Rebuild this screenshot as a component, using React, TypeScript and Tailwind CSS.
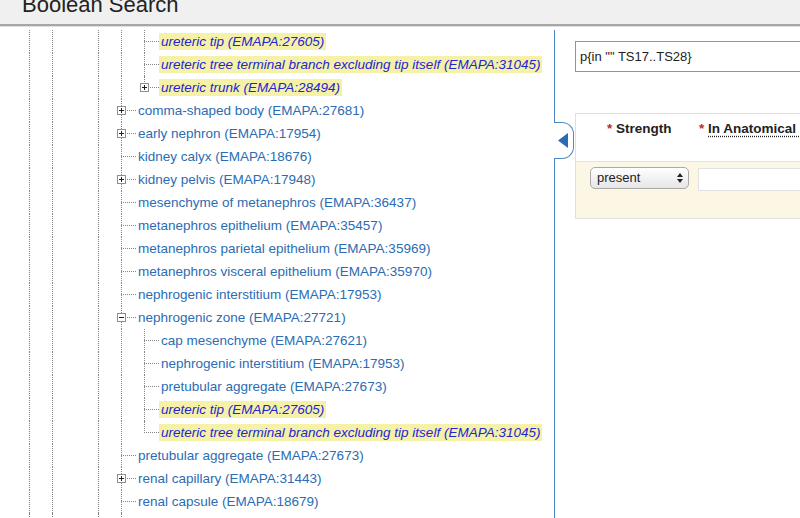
type Row = {
  level: number;
  text: string;
  lines: number[];
  hl?: boolean;
  box?: "+" | "-";
  last?: boolean;
};

const deep = [0, 1, 3, 4];
const mid = [0, 1, 3];

const rows: Row[] = [
  { level: 5, lines: deep, hl: true, text: "ureteric tip (EMAPA:27605)" },
  { level: 5, lines: deep, hl: true, text: "ureteric tree terminal branch excluding tip itself (EMAPA:31045)" },
  { level: 5, lines: deep, hl: true, box: "+", last: true, text: "ureteric trunk (EMAPA:28494)" },
  { level: 4, lines: mid, box: "+", text: "comma-shaped body (EMAPA:27681)" },
  { level: 4, lines: mid, box: "+", text: "early nephron (EMAPA:17954)" },
  { level: 4, lines: mid, text: "kidney calyx (EMAPA:18676)" },
  { level: 4, lines: mid, box: "+", text: "kidney pelvis (EMAPA:17948)" },
  { level: 4, lines: mid, text: "mesenchyme of metanephros (EMAPA:36437)" },
  { level: 4, lines: mid, text: "metanephros epithelium (EMAPA:35457)" },
  { level: 4, lines: mid, text: "metanephros parietal epithelium (EMAPA:35969)" },
  { level: 4, lines: mid, text: "metanephros visceral epithelium (EMAPA:35970)" },
  { level: 4, lines: mid, text: "nephrogenic interstitium (EMAPA:17953)" },
  { level: 4, lines: mid, box: "-", text: "nephrogenic zone (EMAPA:27721)" },
  { level: 5, lines: deep, text: "cap mesenchyme (EMAPA:27621)" },
  { level: 5, lines: deep, text: "nephrogenic interstitium (EMAPA:17953)" },
  { level: 5, lines: deep, text: "pretubular aggregate (EMAPA:27673)" },
  { level: 5, lines: deep, hl: true, text: "ureteric tip (EMAPA:27605)" },
  { level: 5, lines: deep, hl: true, last: true, text: "ureteric tree terminal branch excluding tip itself (EMAPA:31045)" },
  { level: 4, lines: mid, text: "pretubular aggregate (EMAPA:27673)" },
  { level: 4, lines: mid, box: "+", text: "renal capillary (EMAPA:31443)" },
  { level: 4, lines: mid, text: "renal capsule (EMAPA:18679)" },
];

const ToggleBox = ({ sign }: { sign: "+" | "-" }) => (
  <svg width="9" height="9" viewBox="0 0 9 9" className="absolute left-[8px] top-[7px]">
    <rect x="0.5" y="0.5" width="8" height="8" fill="#fff" stroke="#8f8f8f" />
    <line x1="2" y1="4.5" x2="7" y2="4.5" stroke="#222" />
    {sign === "+" && <line x1="4.5" y1="2" x2="4.5" y2="7" stroke="#222" />}
  </svg>
);

const IndentCols = ({ count, lines }: { count: number; lines: number[] }) => (
  <>
    {Array.from({ length: count }).map((_, i) => (
      <div key={i} className="relative w-[23px] h-full shrink-0">
        {lines.includes(i) && (
          <div className="absolute left-[12px] top-0 h-full border-l border-dotted border-[#858585]" />
        )}
      </div>
    ))}
  </>
);

const TreeRow = ({ row }: { row: Row }) => (
  <div className="flex h-[23px] items-center whitespace-nowrap">
    <IndentCols count={row.level} lines={row.lines} />
    <div className="relative w-[27px] h-full shrink-0">
      <div
        className={`absolute left-[12px] top-0 border-l border-dotted border-[#858585] ${
          row.last ? "h-[12px]" : "h-full"
        }`}
      />
      <div className="absolute left-[12px] top-[11px] w-[15px] border-t border-dotted border-[#858585]" />
      {row.box && <ToggleBox sign={row.box} />}
    </div>
    {row.hl ? (
      <span className="inline-block px-[2px] leading-[17px] bg-[#f5f2a8] italic text-[#2424d6]">
        {row.text}
      </span>
    ) : (
      <span className="inline-block px-[2px] leading-[17px] text-[#2b6cb3]">{row.text}</span>
    )}
  </div>
);

const App = () => {
  return (
    <div className="w-[800px] h-[518px] overflow-hidden bg-white font-['Liberation_Sans',Arial,sans-serif]">
      {/* header */}
      <div className="h-[26px] overflow-hidden bg-[#f0f0f0] border-b-2 border-[#a6a6a6] shadow-[0_1px_0_#dedede]">
        <h1 className="mt-[-6px] pl-[22px] text-[22px] leading-[22px] text-[#222] font-normal">Boolean Search</h1>
      </div>

      <div className="flex pt-[4px]">
        {/* tree */}
        <div className="w-[554px] shrink-0 pl-[17px] text-[13.5px]">
          {rows.map((r, i) => (
            <TreeRow key={i} row={r} />
          ))}
          <div className="flex h-[10px]">
            <IndentCols count={5} lines={deep} />
          </div>
        </div>

        {/* query panel */}
        <div className="relative flex-1 h-[488px] border-l border-[#4f86c4] pl-[20px] pt-[11px]">
          <div className="absolute left-[-1px] top-[92px] w-[20px] h-[37px] bg-white border border-l-0 border-[#4f86c4] rounded-r-[12px] flex items-center pl-[4px]">
            <svg width="10" height="15" viewBox="0 0 10 15">
              <polygon points="10,0 10,15 0,7.5" fill="#2a6db4" />
            </svg>
          </div>

          <div className="w-[260px] h-[31px] border border-[#6f9ccf] pl-[4px] flex items-center text-[13px] text-[#222] whitespace-nowrap">
            p{"{"}in "" TS17..TS28{"}"}
          </div>

          <div className="mt-[41px] w-[260px] border border-r-0 border-[#e0e0e0]">
            <div className="flex h-[48px] bg-white border-b border-[#e3e3e3] text-[13.5px] font-bold text-[#222] leading-[18px] whitespace-nowrap overflow-hidden">
              <div className="w-[123px] shrink-0 pl-[31px] pt-[6px]">
                <span className="text-[#b5312f]">*</span> Strength
              </div>
              <div className="shrink-0 pt-[6px]">
                <span className="text-[#b5312f]">*</span>{" "}
                <span className="underline decoration-dotted underline-offset-[3px]">In Anatomical Structure</span>
              </div>
            </div>
            <div className="flex h-[56px] bg-[#fcf6e4] pt-[5px]">
              <div className="ml-[14px] shrink-0 w-[99px] h-[22px] rounded-[5px] border border-[#a9a9a9] bg-gradient-to-b from-white to-[#e6e6e6] flex items-center justify-between pl-[6px] pr-[5px] text-[13px] text-[#222]">
                <span>present</span>
                <svg width="6" height="10" viewBox="0 0 6 10">
                  <polygon points="3,0 6,4 0,4" fill="#222" />
                  <polygon points="0,6 6,6 3,10" fill="#222" />
                </svg>
              </div>
              <div className="ml-[9px] mt-[1px] flex-1 h-[23px] bg-white border border-[#e2e2e2]" />
            </div>
          </div>
        </div>
      </div>
    </div>
  );
};

export default App;
